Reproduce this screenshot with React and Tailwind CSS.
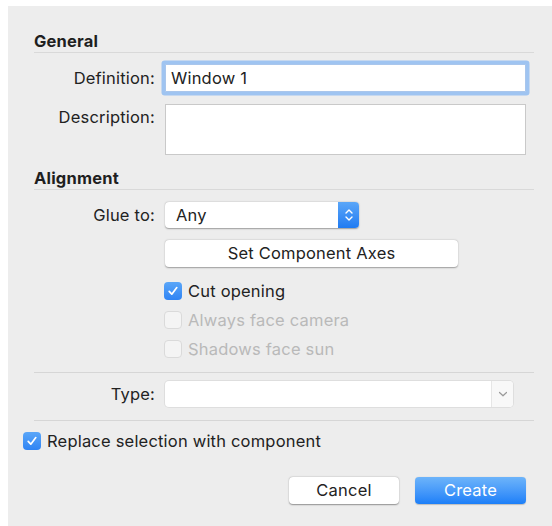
import React from "react";

const font = { fontFamily: "Inter, 'Liberation Sans', sans-serif" };

function Check({ checked, disabled }) {
  if (checked) {
    return (
      <div className="w-[18px] h-[18px] rounded-[4px] bg-gradient-to-b from-[#5aa6f8] to-[#2f84f4] flex items-center justify-center shrink-0">
        <svg width="12" height="12" viewBox="0 0 12 12">
          <path d="M2.2 6.4 L4.8 9.2 L9.8 2.6" fill="none" stroke="white" strokeWidth="1.7" strokeLinecap="round" strokeLinejoin="round" />
        </svg>
      </div>
    );
  }
  return (
    <div className={"w-[18px] h-[18px] rounded-[4px] border shrink-0 " + (disabled ? "border-[#dadada] bg-[#f4f4f4]" : "border-[#b5b5b5] bg-white")} />
  );
}

function Label({ children, className = "" }) {
  return <div className={"w-[147px] shrink-0 text-right pr-0 " + className}>{children}</div>;
}

export default function App() {
  return (
    <div className="w-[552px] h-[526px] bg-white pt-[6px] pl-[8px] text-[16.5px] text-[#222222] tracking-[0.2px]" style={font}>
      <div className="w-full h-full bg-[#ededed] flex flex-col">
        {/* General */}
        <div className="ml-[26px] mt-[25px] h-[20px] leading-[20px] font-bold text-[#1f1f1f] tracking-[0.2px]">General</div>
        <div className="ml-[26px] mr-[18px] mt-[1px] h-[1px] bg-[#d9d9d9]" />
        {/* Definition */}
        <div className="flex items-center mt-[11px] h-[28px]">
          <Label>Definition:</Label>
          <div className="ml-[10px] w-[361px] h-[28px] bg-white border border-[#a9c6ec] rounded-[1px] shadow-[0_0_0_3.5px_#9fc4f1] flex items-center pl-[5px]">
            Window 1
          </div>
        </div>
        {/* Description */}
        <div className="flex mt-[12px]">
          <Label className="pt-[1px]">Description:</Label>
          <div className="ml-[10px] w-[361px] h-[51px] bg-white border border-[#c9c9c9]" />
        </div>
        {/* Alignment */}
        <div className="ml-[26px] mt-[13px] h-[20px] leading-[20px] font-bold text-[#1f1f1f] tracking-[0.2px]">Alignment</div>
        <div className="ml-[26px] mr-[18px] mt-[1px] h-[1px] bg-[#d9d9d9]" />
        {/* Glue to */}
        <div className="flex items-center mt-[12px] h-[26px]">
          <Label>Glue to:</Label>
          <div className="ml-[10px] w-[194px] h-[26px] bg-white rounded-[4px] shadow-[0_0.5px_1.5px_rgba(0,0,0,0.35)] flex items-stretch overflow-hidden">
            <div className="flex-1 flex items-center pl-[11px]">Any</div>
            <div className="w-[21px] bg-gradient-to-b from-[#5aa6f8] to-[#1f7bf2] flex items-center justify-center">
              <svg width="10" height="16" viewBox="0 0 10 16">
                <path d="M2 6 L5 3 L8 6 M2 10 L5 13 L8 10" fill="none" stroke="white" strokeWidth="1.4" strokeLinecap="round" strokeLinejoin="round" />
              </svg>
            </div>
          </div>
        </div>
        {/* Set Component Axes */}
        <div className="flex mt-[12px]">
          <div className="ml-[157px] w-[293px] h-[27px] bg-white rounded-[4px] shadow-[0_0.5px_1.5px_rgba(0,0,0,0.35)] flex items-center justify-center">
            Set Component Axes
          </div>
        </div>
        {/* Checkboxes */}
        <div className="flex items-center ml-[156px] mt-[15px] h-[18px] gap-[6px]">
          <Check checked />
          <span>Cut opening</span>
        </div>
        <div className="flex items-center ml-[156px] mt-[11px] h-[18px] gap-[6px] text-[#b9b9b9]">
          <Check disabled />
          <span>Always face camera</span>
        </div>
        <div className="flex items-center ml-[156px] mt-[11px] h-[18px] gap-[6px] text-[#b9b9b9]">
          <Check disabled />
          <span>Shadows face sun</span>
        </div>
        <div className="ml-[26px] mr-[18px] mt-[14px] h-[1px] bg-[#d6d6d6]" />
        {/* Type */}
        <div className="flex items-center mt-[8px] h-[26px]">
          <Label>Type:</Label>
          <div className="ml-[10px] w-[348px] h-[26px] bg-white rounded-[4px] shadow-[0_0_0_1px_#dedede] flex items-stretch overflow-hidden">
            <div className="flex-1" />
            <div className="w-[22px] border-l border-[#e6e6e6] bg-[#f8f8f8] flex items-center justify-center">
              <svg width="10" height="8" viewBox="0 0 10 8">
                <path d="M1.5 2.5 L5 5.8 L8.5 2.5" fill="none" stroke="#9a9a9a" strokeWidth="1.2" strokeLinecap="round" strokeLinejoin="round" />
              </svg>
            </div>
          </div>
        </div>
        <div className="ml-[26px] mr-[18px] mt-[13px] h-[1px] bg-[#d6d6d6]" />
        {/* Replace */}
        <div className="flex items-center ml-[15px] mt-[11px] h-[18px] gap-[6px]">
          <Check checked />
          <span>Replace selection with component</span>
        </div>
        {/* Buttons */}
        <div className="flex mt-[27px] ml-[281px] gap-[16px]">
          <div className="w-[110px] h-[27px] bg-white rounded-[4px] shadow-[0_0.5px_1.5px_rgba(0,0,0,0.4)] flex items-center justify-center">
            Cancel
          </div>
          <div className="w-[111px] h-[27px] rounded-[4px] bg-gradient-to-b from-[#6db4fa] to-[#1b7ff8] text-white flex items-center justify-center shadow-[0_0.5px_1px_rgba(0,0,0,0.2)]">
            Create
          </div>
        </div>
      </div>
    </div>
  );
}
